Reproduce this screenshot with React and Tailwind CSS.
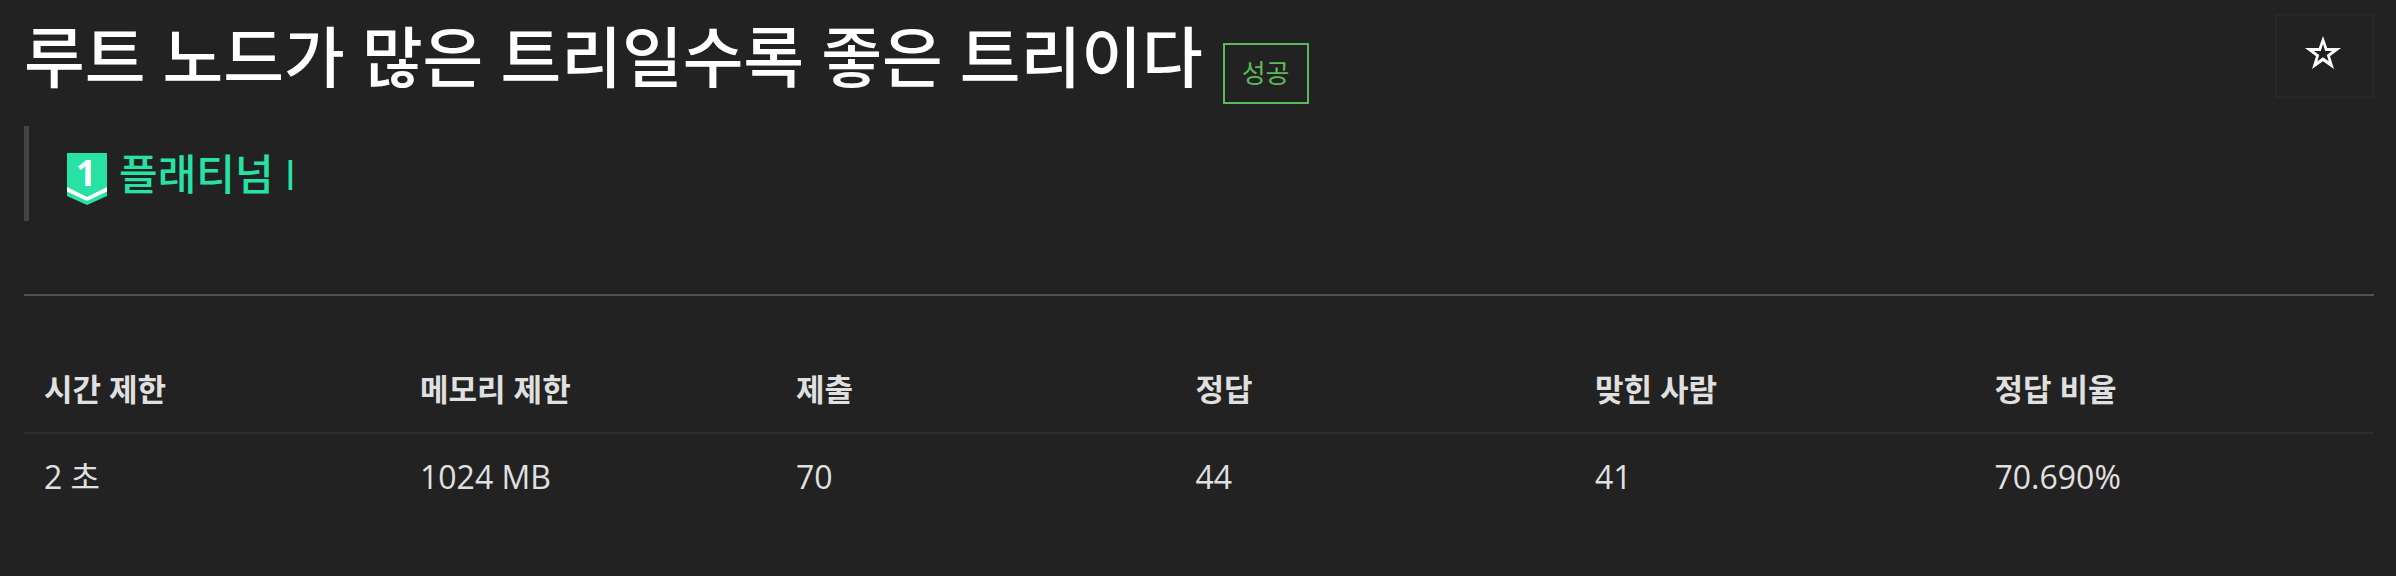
const columns = [
  { label: "시간 제한", value: "2 초", width: "w-[16%]" },
  { label: "메모리 제한", value: "1024 MB", width: "w-[16%]" },
  { label: "제출", value: "70", width: "w-[17%]" },
  { label: "정답", value: "44", width: "w-[17%]" },
  { label: "맞힌 사람", value: "41", width: "w-[17%]" },
  { label: "정답 비율", value: "70.690%", width: "w-[17%]" },
];

function TierIcon() {
  return (
    <svg viewBox="0 0 40 52" className="h-[52px] w-10 shrink-0 overflow-visible" role="img" aria-label="1">
      <path d="M0 0h40v43L20 52 0 43z" fill="#27e2a4" />
      <path d="M0 34l20 10 20-10v4.500L20 48 0 38.500z" fill="#fff" />
      <text
        x="19"
        y="33"
        textAnchor="middle"
        fill="#fff"
        className="font-['Open_Sans',sans-serif] text-4xl leading-none font-bold"
      >
        1
      </text>
    </svg>
  );
}

function StarIcon() {
  return (
    <svg viewBox="0 0 36 33" className="h-[33px] w-9" aria-hidden="true">
      <path
        fillRule="evenodd"
        fill="#fff"
        d="M18 0l4.200 12H36L25 20.300 29 33 18 25.200 7 33l4-12.700L0 12h13.800zM18 8l-2.200 7H9l5.200 4-1.900 6.300L18 21.300l5.700 4L21.800 19 27 15h-6.800z"
      />
    </svg>
  );
}

export default function App() {
  return (
    <main className="min-h-screen bg-[#222222] pt-3 pr-[22px] pb-12 pl-6 font-['Open_Sans','Noto_Sans_CJK_KR',sans-serif] text-[#e0e0e0]">
      <header className="flex items-start justify-between">
        <div className="flex items-start gap-5">
          <h1 className="text-[66px] leading-[88px] font-medium text-white">
            루트 노드가 많은 트리일수록 좋은 트리이다
          </h1>
          <span className="mt-[31px] border-2 border-[#5cb85c] px-[17px] text-[26px] leading-[57px] text-[#5cb85c]">
            성공
          </span>
        </div>
        <button
          type="button"
          aria-label="즐겨찾기"
          className="mt-0.5 flex h-[84px] w-[99px] justify-center border-2 border-[#272727] pt-5 pr-1"
        >
          <StarIcon />
        </button>
      </header>

      <blockquote className="mt-[22px] flex h-[95px] items-start gap-3 border-l-[5px] border-[#444444] pt-[18px] pl-[38px] text-[#27e2a4]">
        <span className="pt-[9px]">
          <TierIcon />
        </span>
        <span className="text-[42px] leading-[60px] font-medium">플래티넘 I</span>
      </blockquote>

      <hr className="mt-[73px] border-t-2 border-[#505050]" />

      <table className="mt-[52px] w-full table-fixed text-left leading-[46px]">
        <thead>
          <tr className="border-b-2 border-[#2c2c2c]">
            {columns.map((c) => (
              <th key={c.label} scope="col" className={`px-5 pt-[18px] pb-5 text-[31px] font-bold ${c.width}`}>
                {c.label}
              </th>
            ))}
          </tr>
        </thead>
        <tbody>
          <tr>
            {columns.map((c) => (
              <td key={c.label} className="px-5 py-5 text-[32px]">
                {c.value}
              </td>
            ))}
          </tr>
        </tbody>
      </table>
    </main>
  );
}
